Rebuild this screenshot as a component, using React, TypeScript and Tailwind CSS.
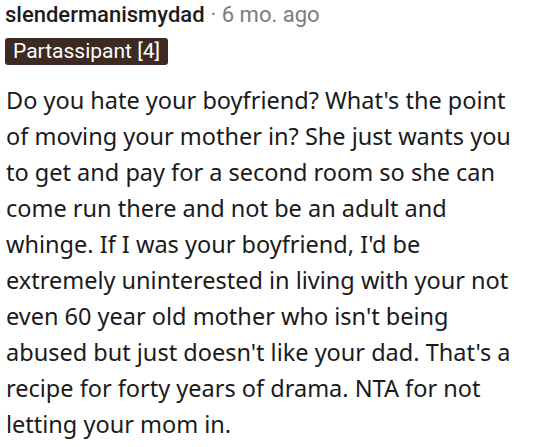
export default function App() {
  return (
    <div className="w-[542px] h-[447px] bg-white overflow-hidden px-[5px] pt-[1px]">
      <div className="flex items-baseline text-[22px] leading-[28px] font-['Roboto',sans-serif]">
        <span className="font-medium text-[#1c1c1c]">slendermanismydad</span>
        <span className="text-[#7c7c7c] ml-[6px]">· 6 mo. ago</span>
      </div>
      <div className="mt-[9px] flex">
        <span className="inline-flex items-center h-[27px] px-[8px] rounded-[3px] bg-[#3d2a22] text-white text-[21px] font-['Roboto',sans-serif]">
          Partassipant [4]
        </span>
      </div>
      <p className="mt-[17px] pl-[1px] w-[515px] text-[23.5px] leading-[36px] text-[#1a1a1b] font-['Noto_Sans',sans-serif]">
        Do you hate your boyfriend? What's the point of moving your mother in? She just wants you to get and pay for a second room so she can come run there and not be an adult and whinge. If I was your boyfriend, I'd be extremely uninterested in living with your not even 60 year old mother who isn't being abused but just doesn't like your dad. That's a recipe for forty years of drama. NTA for not letting your mom in.
      </p>
    </div>
  );
}
